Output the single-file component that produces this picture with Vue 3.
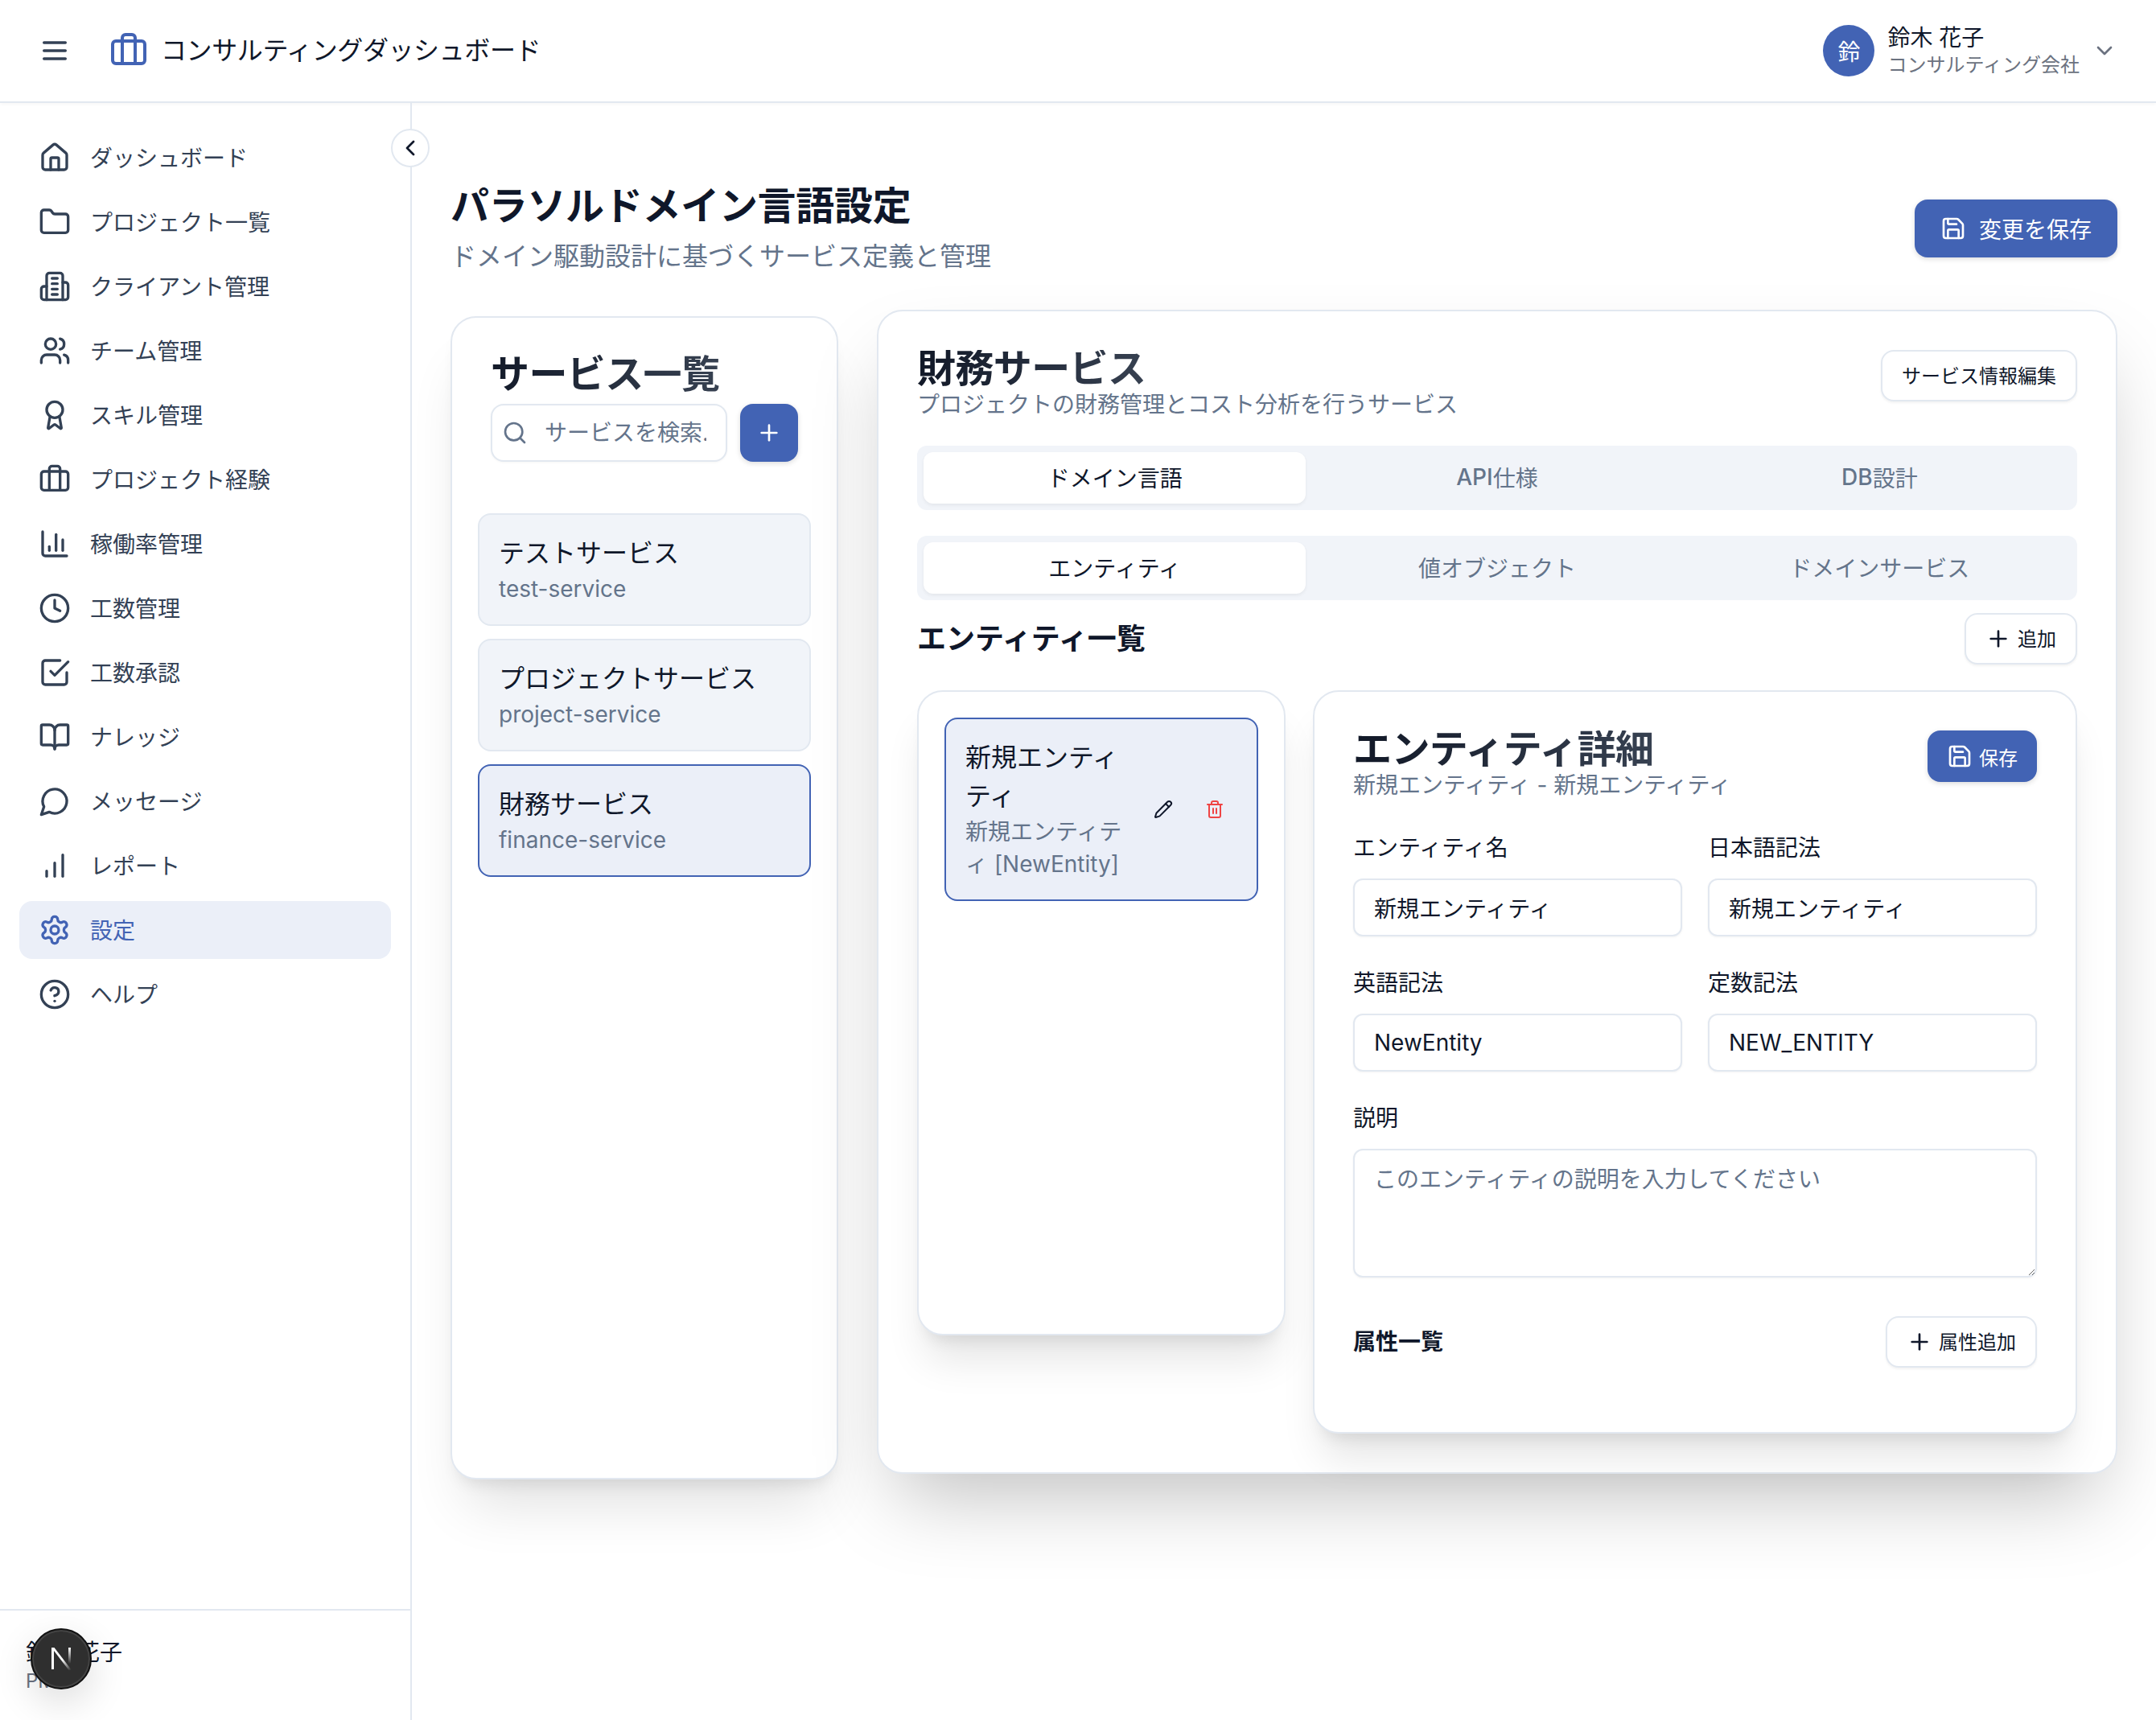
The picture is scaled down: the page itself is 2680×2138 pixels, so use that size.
<template>
  <div class="app">
    <header class="topbar">
      <div class="topbar-left">
        <Icon name="menu" :size="40" class="c-dark" />
        <Icon name="briefcase" :size="48" class="c-primary logo" />
        <span class="app-title">コンサルティングダッシュボード</span>
      </div>
      <div class="user">
        <div class="avatar">鈴</div>
        <div class="user-text">
          <div class="user-name">鈴木 花子</div>
          <div class="user-org">コンサルティング会社</div>
        </div>
        <Icon name="chevronDown" :size="32" class="c-gray" />
      </div>
    </header>

    <div class="body">
      <aside class="sidebar">
        <nav class="nav">
          <a v-for="item in navItems" :key="item.label" class="nav-item" :class="{ active: item.active }">
            <Icon :name="item.icon" :size="40" />
            <span class="nav-label">{{ item.label }}</span>
          </a>
        </nav>
        <div class="side-foot">
          <div class="foot-name">鈴木 花子</div>
          <div class="foot-role">PM</div>
        </div>
        <button class="collapse"><Icon name="chevronLeft" :size="32" /></button>
        <div class="next-badge">
          <svg width="36" height="36" viewBox="0 0 36 36" fill="none">
            <defs>
              <linearGradient id="nextDiag" x1="6" y1="4" x2="30" y2="32" gradientUnits="userSpaceOnUse">
                <stop offset="0.55" stop-color="#fff" />
                <stop offset="1" stop-color="#fff" stop-opacity="0" />
              </linearGradient>
              <linearGradient id="nextStem" x1="28" y1="4" x2="28" y2="24" gradientUnits="userSpaceOnUse">
                <stop offset="0" stop-color="#fff" />
                <stop offset="1" stop-color="#fff" stop-opacity="0" />
              </linearGradient>
            </defs>
            <rect x="6" y="4" width="3" height="27" fill="#fff" />
            <polygon points="6,4 9.5,4 31,32 27.5,32" fill="url(#nextDiag)" />
            <rect x="27" y="4" width="3" height="20" fill="url(#nextStem)" />
          </svg>
        </div>
      </aside>

      <main class="main">
        <div class="page-head">
          <div>
            <h1 class="page-title">パラソルドメイン言語設定</h1>
            <p class="page-sub">ドメイン駆動設計に基づくサービス定義と管理</p>
          </div>
          <button class="btn-primary btn-save-all"><Icon name="save" :size="32" />変更を保存</button>
        </div>

        <div class="columns">
          <section class="card services">
            <h2 class="card-title">サービス一覧</h2>
            <div class="search-row">
              <div class="search">
                <Icon name="search" :size="32" class="search-icon" />
                <input class="search-input" placeholder="サービスを検索..." />
              </div>
              <button class="btn-primary btn-add"><Icon name="plus" :size="32" /></button>
            </div>
            <div class="service-list">
              <div v-for="s in services" :key="s.id" class="service" :class="{ selected: s.selected }">
                <div class="service-name">{{ s.name }}</div>
                <div class="service-id">{{ s.id }}</div>
              </div>
            </div>
          </section>

          <section class="card detail">
            <div class="detail-head">
              <div>
                <h2 class="card-title tight">財務サービス</h2>
                <p class="card-sub">プロジェクトの財務管理とコスト分析を行うサービス</p>
              </div>
              <button class="btn-outline">サービス情報編集</button>
            </div>

            <div class="tabs first">
              <div v-for="(t, i) in tabs" :key="t.text" class="tab" :class="{ on: i === 0 }">
                <span class="latin">{{ t.latin }}</span>{{ t.text }}
              </div>
            </div>
            <div class="tabs second">
              <div v-for="(t, i) in subTabs" :key="t" class="tab" :class="{ on: i === 0 }">{{ t }}</div>
            </div>

            <div class="section-row">
              <h3 class="section-title">エンティティ一覧</h3>
              <button class="btn-outline with-icon"><Icon name="plus" :size="32" />追加</button>
            </div>

            <div class="entity-area">
              <div class="sub-card entity-list">
                <div class="entity">
                  <div class="entity-text">
                    <div class="entity-name">新規エンティティ</div>
                    <div class="entity-desc">新規エンティティ [NewEntity]</div>
                  </div>
                  <button class="icon-btn"><Icon name="pencil" :size="24" /></button>
                  <button class="icon-btn danger"><Icon name="trash" :size="24" /></button>
                </div>
              </div>

              <div class="sub-card entity-detail">
                <div class="detail-head">
                  <div>
                    <h2 class="card-title tight">エンティティ詳細</h2>
                    <p class="card-sub">新規エンティティ - 新規エンティティ</p>
                  </div>
                  <button class="btn-primary btn-save"><Icon name="save" :size="32" />保存</button>
                </div>

                <div class="form-grid">
                  <label v-for="f in fields" :key="f.label" class="field">
                    <span class="field-label">{{ f.label }}</span>
                    <input class="field-input" :value="f.value" />
                  </label>
                </div>

                <label class="field desc-field">
                  <span class="field-label">説明</span>
                  <textarea class="field-area" placeholder="このエンティティの説明を入力してください"></textarea>
                </label>

                <div class="attr-row">
                  <h4 class="attr-title">属性一覧</h4>
                  <button class="btn-outline with-icon"><Icon name="plus" :size="32" />属性追加</button>
                </div>
              </div>
            </div>
          </section>
        </div>
      </main>
    </div>
  </div>
</template>

<script setup>
import { h } from 'vue'

const circle = (cx, cy, r) => `M${cx - r} ${cy}a${r} ${r} 0 1 0 ${r * 2} 0a${r} ${r} 0 1 0 ${-r * 2} 0`

const icons = {
  menu: ['M4 6h16', 'M4 12h16', 'M4 18h16'],
  briefcase: ['M16 20V4a2 2 0 0 0-2-2h-4a2 2 0 0 0-2 2v16', 'M4 6h16a2 2 0 0 1 2 2v10a2 2 0 0 1-2 2H4a2 2 0 0 1-2-2V8a2 2 0 0 1 2-2z'],
  chevronDown: ['m6 9 6 6 6-6'],
  chevronLeft: ['m15 18-6-6 6-6'],
  home: ['M15 21v-8a1 1 0 0 0-1-1h-4a1 1 0 0 0-1 1v8', 'M3 10a2 2 0 0 1 .709-1.528l7-5.999a2 2 0 0 1 2.582 0l7 5.999A2 2 0 0 1 21 10v9a2 2 0 0 1-2 2H5a2 2 0 0 1-2-2z'],
  folder: ['M20 20a2 2 0 0 0 2-2V8a2 2 0 0 0-2-2h-7.9a2 2 0 0 1-1.69-.9L9.6 3.9A2 2 0 0 0 7.93 3H4a2 2 0 0 0-2 2v13a2 2 0 0 0 2 2Z'],
  building: ['M6 22V4a2 2 0 0 1 2-2h8a2 2 0 0 1 2 2v18Z', 'M6 12H4a2 2 0 0 0-2 2v6a2 2 0 0 0 2 2h2', 'M18 9h2a2 2 0 0 1 2 2v9a2 2 0 0 1-2 2h-2', 'M10 6h4', 'M10 10h4', 'M10 14h4', 'M10 18h4'],
  users: ['M16 21v-2a4 4 0 0 0-4-4H6a4 4 0 0 0-4 4v2', circle(9, 7, 4), 'M22 21v-2a4 4 0 0 0-3-3.87', 'M16 3.13a4 4 0 0 1 0 7.75'],
  award: ['m15.477 12.89 1.515 8.526a.5.5 0 0 1-.81.47l-3.58-2.687a1 1 0 0 0-1.197 0l-3.586 2.686a.5.5 0 0 1-.81-.469l1.514-8.526', circle(12, 8, 6)],
  chartAxis: ['M3 3v16a2 2 0 0 0 2 2h16', 'M18 17V9', 'M13 17V5', 'M8 17v-3'],
  clock: [circle(12, 12, 10), 'M12 6v6l4 2'],
  check: ['m9 11 3 3L22 4', 'M21 12v7a2 2 0 0 1-2 2H5a2 2 0 0 1-2-2V5a2 2 0 0 1 2-2h11'],
  book: ['M12 7v14', 'M3 18a1 1 0 0 1-1-1V4a1 1 0 0 1 1-1h5a4 4 0 0 1 4 4 4 4 0 0 1 4-4h5a1 1 0 0 1 1 1v13a1 1 0 0 1-1 1h-6a3 3 0 0 0-3 3 3 3 0 0 0-3-3z'],
  message: ['M7.9 20A9 9 0 1 0 4 16.1L2 22Z'],
  bars: ['M12 20V10', 'M18 20V4', 'M6 20v-4'],
  settings: ['M12.22 2h-.44a2 2 0 0 0-2 2v.18a2 2 0 0 1-1 1.73l-.43.25a2 2 0 0 1-2 0l-.15-.08a2 2 0 0 0-2.73.73l-.22.38a2 2 0 0 0 .73 2.73l.15.1a2 2 0 0 1 1 1.72v.51a2 2 0 0 1-1 1.74l-.15.09a2 2 0 0 0-.73 2.73l.22.38a2 2 0 0 0 2.73.73l.15-.08a2 2 0 0 1 2 0l.43.25a2 2 0 0 1 1 1.73V20a2 2 0 0 0 2 2h.44a2 2 0 0 0 2-2v-.18a2 2 0 0 1 1-1.73l.43-.25a2 2 0 0 1 2 0l.15.08a2 2 0 0 0 2.73-.73l.22-.39a2 2 0 0 0-.73-2.73l-.15-.08a2 2 0 0 1-1-1.74v-.5a2 2 0 0 1 1-1.74l.15-.09a2 2 0 0 0 .73-2.73l-.22-.38a2 2 0 0 0-2.73-.73l-.15.08a2 2 0 0 1-2 0l-.43-.25a2 2 0 0 1-1-1.73V4a2 2 0 0 0-2-2z', circle(12, 12, 3)],
  help: [circle(12, 12, 10), 'M9.09 9a3 3 0 0 1 5.83 1c0 2-3 3-3 3', 'M12 17h.01'],
  save: ['M15.2 3a2 2 0 0 1 1.4.6l3.8 3.8a2 2 0 0 1 .6 1.4V19a2 2 0 0 1-2 2H5a2 2 0 0 1-2-2V5a2 2 0 0 1 2-2z', 'M17 21v-7a1 1 0 0 0-1-1H8a1 1 0 0 0-1 1v7', 'M7 3v4a1 1 0 0 0 1 1h7'],
  search: [circle(11, 11, 8), 'm21 21-4.3-4.3'],
  plus: ['M5 12h14', 'M12 5v14'],
  pencil: ['M21.174 6.812a1 1 0 0 0-3.986-3.987L3.842 16.174a2 2 0 0 0-.5.83l-1.321 4.352a.5.5 0 0 0 .623.622l4.353-1.32a2 2 0 0 0 .83-.497z', 'm15 5 4 4'],
  trash: ['M3 6h18', 'M19 6v14c0 1-1 2-2 2H7c-1 0-2-1-2-2V6', 'M8 6V4c0-1 1-2 2-2h4c1 0 2 1 2 2v2', 'M10 11v6', 'M14 11v6'],
}

const Icon = (props) =>
  h(
    'svg',
    {
      width: props.size,
      height: props.size,
      viewBox: '0 0 24 24',
      fill: 'none',
      stroke: 'currentColor',
      'stroke-width': 2,
      'stroke-linecap': 'round',
      'stroke-linejoin': 'round',
      style: 'flex-shrink:0',
    },
    icons[props.name].map((d) => h('path', { d })),
  )
Icon.props = ['name', 'size']

const navItems = [
  { label: 'ダッシュボード', icon: 'home' },
  { label: 'プロジェクト一覧', icon: 'folder' },
  { label: 'クライアント管理', icon: 'building' },
  { label: 'チーム管理', icon: 'users' },
  { label: 'スキル管理', icon: 'award' },
  { label: 'プロジェクト経験', icon: 'briefcase' },
  { label: '稼働率管理', icon: 'chartAxis' },
  { label: '工数管理', icon: 'clock' },
  { label: '工数承認', icon: 'check' },
  { label: 'ナレッジ', icon: 'book' },
  { label: 'メッセージ', icon: 'message' },
  { label: 'レポート', icon: 'bars' },
  { label: '設定', icon: 'settings', active: true },
  { label: 'ヘルプ', icon: 'help' },
]

const services = [
  { name: 'テストサービス', id: 'test-service' },
  { name: 'プロジェクトサービス', id: 'project-service' },
  { name: '財務サービス', id: 'finance-service', selected: true },
]

const tabs = [
  { latin: '', text: 'ドメイン言語' },
  { latin: 'API', text: '仕様' },
  { latin: 'DB', text: '設計' },
]
const subTabs = ['エンティティ', '値オブジェクト', 'ドメインサービス']

const fields = [
  { label: 'エンティティ名', value: '新規エンティティ' },
  { label: '日本語記法', value: '新規エンティティ' },
  { label: '英語記法', value: 'NewEntity' },
  { label: '定数記法', value: 'NEW_ENTITY' },
]
</script>

<style>
html,
body {
  margin: 0;
  overflow: hidden;
  background: #fff;
}
</style>

<style scoped>
* {
  box-sizing: border-box;
}

.app {
  width: 2680px;
  height: 2138px;
  display: flex;
  flex-direction: column;
  overflow: hidden;
  font-family: Inter, "Noto Sans CJK JP", sans-serif;
  color: #0f172a;
  background: #fff;
}

h1,
h2,
h3,
h4,
p {
  margin: 0;
}

button,
input,
textarea {
  font-family: inherit;
}

.c-dark {
  color: #334155;
}

.c-primary {
  color: #4263b4;
}

.c-gray {
  color: #6b7280;
}

.topbar {
  height: 128px;
  flex-shrink: 0;
  padding: 0 48px;
  display: flex;
  align-items: center;
  justify-content: space-between;
  border-bottom: 2px solid #e2e8f0;
  box-shadow: 0 2px 4px rgba(0, 0, 0, 0.03);
}

.topbar-left {
  display: flex;
  align-items: center;
}

.logo {
  margin-left: 48px;
}

.app-title {
  margin-left: 16px;
  font-size: 32px;
  line-height: 48px;
  letter-spacing: -0.4px;
}

.user {
  display: flex;
  align-items: center;
}

.avatar {
  width: 64px;
  height: 64px;
  border-radius: 50%;
  background: #4263b4;
  color: #fff;
  font-size: 28px;
  display: flex;
  align-items: center;
  justify-content: center;
}

.user-text {
  margin: 0 15px 0 16px;
}

.user-name {
  font-size: 28px;
  line-height: 36px;
}

.user-org {
  font-size: 24px;
  line-height: 32px;
  color: #6b7280;
}

.body {
  flex: 1;
  display: flex;
  min-height: 0;
}

.sidebar {
  position: relative;
  width: 512px;
  flex-shrink: 0;
  display: flex;
  flex-direction: column;
  border-right: 2px solid #e2e8f0;
}

.nav {
  flex: 1;
  padding: 32px 24px;
  display: flex;
  flex-direction: column;
  gap: 8px;
}

.nav-item {
  height: 72px;
  padding: 0 24px;
  display: flex;
  align-items: center;
  gap: 24px;
  border-radius: 16px;
  font-size: 28px;
  color: #334155;
}

.nav-label {
  padding-bottom: 3px;
}

.nav-item.active {
  background: #ebeff8;
  color: #4263b4;
}

.side-foot {
  border-top: 2px solid #e2e8f0;
  padding: 32px;
}

.foot-name {
  font-size: 28px;
  line-height: 40px;
}

.foot-role {
  font-size: 24px;
  line-height: 32px;
  color: #6b7280;
}

.collapse {
  position: absolute;
  top: 32px;
  right: -24px;
  width: 48px;
  height: 48px;
  padding: 0;
  border-radius: 50%;
  border: 2px solid #e2e8f0;
  background: #fff;
  color: #0f172a;
  display: flex;
  align-items: center;
  justify-content: center;
  z-index: 2;
}

.next-badge {
  position: absolute;
  left: 38px;
  bottom: 38px;
  width: 76px;
  height: 76px;
  border-radius: 50%;
  background: #2f2f2f;
  border: 2px solid #111;
  box-shadow: inset 0 0 0 2px #444, 0 16px 48px rgba(0, 0, 0, 0.14);
  display: flex;
  align-items: center;
  justify-content: center;
}

.main {
  flex: 1;
  min-width: 0;
  padding: 96px 48px 0;
}

.page-head {
  display: flex;
  justify-content: space-between;
  align-items: flex-start;
}

.page-title {
  font-size: 48px;
  line-height: 64px;
  font-weight: 700;
  letter-spacing: -0.3px;
  color: #0f172a;
}

.page-sub {
  margin-top: 8px;
  font-size: 32px;
  line-height: 46px;
  color: #64748b;
}

.btn-primary {
  border: none;
  background: #4263b4;
  color: #fff;
  border-radius: 16px;
  display: flex;
  align-items: center;
  justify-content: center;
  box-shadow: 0 2px 6px rgba(0, 0, 0, 0.14);
}

.btn-save-all {
  margin-top: 24px;
  width: 252px;
  height: 72px;
  gap: 16px;
  font-size: 28px;
}

.columns {
  margin-top: 43px;
  display: grid;
  grid-template-columns: 482px 1fr;
  gap: 48px;
  align-items: start;
}

.card,
.sub-card {
  background: #fff;
  border: 2px solid #e2e8f0;
  border-radius: 32px;
}

.detail {
  box-shadow: 0 50px 100px -24px rgba(0, 0, 0, 0.25);
}

.services {
  box-shadow: 0 50px 70px -20px rgba(0, 0, 0, 0.12), 0 14px 20px -10px rgba(0, 0, 0, 0.1);
}

.sub-card {
  box-shadow: 0 40px 50px -10px rgba(0, 0, 0, 0.1), 0 16px 20px -12px rgba(0, 0, 0, 0.1);
}

.services {
  margin-top: 8px;
  height: 1446px;
  padding: 32px;
}

.card-title {
  font-size: 48px;
  line-height: 64px;
  font-weight: 700;
  letter-spacing: -0.6px;
  margin-top: 6px;
  padding-left: 16px;
  background-image: linear-gradient(90deg, #111827, #374151);
  -webkit-background-clip: text;
  background-clip: text;
  color: transparent;
  width: fit-content;
}

.card-title.tight {
  margin-top: 0;
  padding-left: 0;
  line-height: 46px;
}

.card-sub {
  margin-top: 2px;
  font-size: 28px;
  line-height: 40px;
  color: #64748b;
}

.search-row {
  margin-top: 5px;
  padding: 0 16px;
  display: flex;
  gap: 16px;
}

.search {
  position: relative;
  flex: 1;
  min-width: 0;
}

.search-icon {
  position: absolute;
  left: 14px;
  top: 20px;
  color: #64748b;
}

.search-input {
  width: 100%;
  height: 72px;
  padding: 0 24px 0 65px;
  border: 2px solid #e2e8f0;
  border-radius: 16px;
  font-size: 28px;
  outline: none;
  background: #fff;
  box-shadow: 0 1px 3px rgba(0, 0, 0, 0.04);
}

.search-input::placeholder,
.field-area::placeholder {
  color: #64748b;
  opacity: 1;
}

.btn-add {
  width: 72px;
  height: 72px;
  padding: 0;
  flex-shrink: 0;
}

.service-list {
  margin-top: 64px;
  display: flex;
  flex-direction: column;
  gap: 16px;
}

.service {
  height: 140px;
  padding: 24px;
  border: 2px solid #e2e8f0;
  border-radius: 16px;
  background: #f1f4f9;
}

.service.selected {
  border-color: #4263b4;
  background: #ebeff8;
}

.service-name {
  font-size: 32px;
  line-height: 48px;
}

.service-id {
  font-size: 28px;
  line-height: 40px;
  color: #64748b;
}

.detail {
  padding: 48px;
}

.detail-head {
  display: flex;
  justify-content: space-between;
  align-items: flex-start;
}

.btn-outline {
  height: 64px;
  padding: 0 24px 3px;
  border: 2px solid #e2e8f0;
  border-radius: 16px;
  background: #fff;
  color: #0f172a;
  font-size: 24px;
  display: flex;
  align-items: center;
  gap: 8px;
  box-shadow: 0 2px 3px rgba(0, 0, 0, 0.05);
}

.with-icon svg {
  margin-top: 3px;
}

.tabs {
  height: 80px;
  padding: 8px;
  border-radius: 12px;
  background: #f1f4f9;
  display: grid;
  grid-template-columns: repeat(3, 1fr);
}

.tabs.first {
  margin-top: 31px;
}

.tabs.second {
  margin-top: 32px;
}

.tab {
  padding-bottom: 3px;
  border-radius: 12px;
  display: flex;
  align-items: center;
  justify-content: center;
  font-size: 28px;
  color: #64748b;
}

.latin {
  font-weight: 500;
}

.tab.on {
  background: #fff;
  color: #0f172a;
  box-shadow: 0 2px 4px rgba(0, 0, 0, 0.06);
}

.section-row {
  margin-top: 16px;
  display: flex;
  align-items: center;
  justify-content: space-between;
}

.section-title {
  font-size: 36px;
  line-height: 48px;
  font-weight: 700;
}

.entity-area {
  margin-top: 32px;
  display: grid;
  grid-template-columns: 458px 1fr;
  gap: 34px;
  align-items: start;
}

.entity-list {
  height: 802px;
  padding: 32px;
}

.entity {
  padding: 24px;
  border: 2px solid #4263b4;
  border-radius: 16px;
  background: #ebeff8;
  display: flex;
  align-items: center;
  gap: 8px;
}

.entity-text {
  flex: 1;
  min-width: 0;
  margin-right: 8px;
}

.entity-name {
  font-size: 32px;
  line-height: 48px;
}

.entity-desc {
  font-size: 28px;
  line-height: 40px;
  color: #64748b;
}

.icon-btn {
  width: 56px;
  height: 56px;
  padding: 0;
  flex-shrink: 0;
  border: none;
  background: none;
  color: #0f172a;
  display: flex;
  align-items: center;
  justify-content: center;
}

.icon-btn.danger {
  color: #ef4444;
}

.entity-detail {
  padding: 48px;
}

.btn-save {
  height: 64px;
  width: 136px;
  gap: 8px;
  font-size: 24px;
}

.form-grid {
  margin-top: 38px;
  display: grid;
  grid-template-columns: 1fr 1fr;
  gap: 38px 32px;
}

.field {
  display: flex;
  flex-direction: column;
  gap: 18px;
  min-width: 0;
}

.field-label {
  font-size: 28px;
  line-height: 40px;
}

.field-input {
  width: 100%;
  height: 72px;
  padding: 0 24px;
  border: 2px solid #e2e8f0;
  border-radius: 12px;
  font-size: 28px;
  color: #0f172a;
  outline: none;
  box-shadow: 0 1px 3px rgba(0, 0, 0, 0.05);
}

.desc-field {
  margin-top: 38px;
}

.field-area {
  display: block;
  width: 100%;
  height: 160px;
  padding: 16px 24px;
  border: 2px solid #e2e8f0;
  border-radius: 12px;
  font-size: 28px;
  line-height: 40px;
  outline: none;
  resize: vertical;
  box-shadow: 0 1px 3px rgba(0, 0, 0, 0.05);
}

.attr-row {
  margin: 48px 0 32px;
  display: flex;
  align-items: center;
  justify-content: space-between;
}

.attr-title {
  font-size: 28px;
  line-height: 40px;
  font-weight: 700;
}
</style>
